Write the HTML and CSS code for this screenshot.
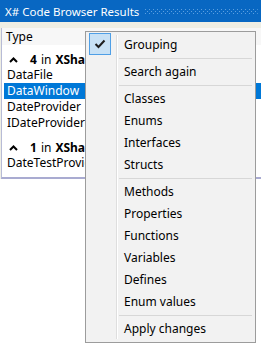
FILE: index.html
```html
<!DOCTYPE html>
<html>
<head>
    <title>X# Code Browser Results</title>
    <meta name="viewport" content="width=device-width, initial-scale=1.0">
    <link rel="stylesheet" href="styles.css">
</head>
<body>
    <div class="window">
        <!-- Barra de título -->
        <div class="titlebar">
            <span class="title">X# Code Browser Results</span>
            <svg class="grip" height="5">
                <defs>
                    <pattern id="dots" width="4" height="4" patternUnits="userSpaceOnUse">
                        <rect x="0" y="0" width="1" height="1" fill="#5b9fe0"/>
                        <rect x="2" y="2" width="1" height="1" fill="#5b9fe0"/>
                    </pattern>
                </defs>
                <rect width="100%" height="5" fill="url(#dots)"/>
            </svg>
        </div>

        <div class="panel">
            <div class="list">
                <div class="list-header">Type</div>

                <div class="group-header">
                    <svg class="chevron" width="9" height="6" viewBox="0 0 9 6"><path d="M1 5 L4.5 1.5 L8 5" fill="none" stroke="#000" stroke-width="2"/></svg>
                    <b>4</b> in <b>XSharp.CodeBrowser</b>
                </div>
                <div class="row">DataFile</div>
                <div class="row selected">DataWindow</div>
                <div class="row">DateProvider</div>
                <div class="row">IDateProvider</div>

                <div class="group-header second">
                    <svg class="chevron" width="9" height="6" viewBox="0 0 9 6"><path d="M1 5 L4.5 1.5 L8 5" fill="none" stroke="#000" stroke-width="2"/></svg>
                    <b>1</b> in <b>XSharp.CodeBrowser.Tests</b>
                </div>
                <div class="row">DateTestProvider</div>
            </div>
        </div>
    </div>

    <!-- Menu de contexto -->
    <div class="context-menu">
        <div class="menu-item checked">
            <span class="check">
                <svg width="12" height="10" viewBox="0 0 12 10"><path d="M1.5 5 L4.5 8 L10.5 1.5" fill="none" stroke="#1e1e1e" stroke-width="2"/></svg>
            </span>
            Grouping
        </div>
        <div class="separator"></div>
        <div class="menu-item">Search again</div>
        <div class="separator"></div>
        <div class="menu-item">Classes</div>
        <div class="menu-item">Enums</div>
        <div class="menu-item">Interfaces</div>
        <div class="menu-item">Structs</div>
        <div class="separator"></div>
        <div class="menu-item">Methods</div>
        <div class="menu-item">Properties</div>
        <div class="menu-item">Functions</div>
        <div class="menu-item">Variables</div>
        <div class="menu-item">Defines</div>
        <div class="menu-item">Enum values</div>
        <div class="separator"></div>
        <div class="menu-item">Apply changes</div>
    </div>
</body>
</html>
```

FILE: styles.css
```css
body {
    font-family: "Noto Sans", "Open Sans", sans-serif;
    font-size: 12px;
    margin: 0;
    padding: 0;
    width: 261px;
    height: 347px;
    overflow: hidden;
    background-color: #ffffff;
    color: #000000;
}

.titlebar {
    display: flex;
    align-items: center;
    height: 22px;
    background-color: #0867c2;
    color: #ffffff;
}

.title {
    padding-left: 5px;
    font-size: 11.5px;
    white-space: nowrap;
}

.grip {
    flex: 1;
    margin: 0 3px 0 6px;
}

.panel {
    background-color: #eeeee4;
    padding-top: 6px;
    padding-left: 1px;
}

.list {
    width: 290px;
    background-color: #ffffff;
    border-left: 1px solid #b7bbd6;
    border-bottom: 2px solid #a9abd1;
    padding-bottom: 6px;
    white-space: nowrap;
    overflow: hidden;
}

.list-header {
    height: 17px;
    line-height: 17px;
    padding-left: 4px;
    background-color: #f7f7f7;
}

.group-header {
    display: flex;
    align-items: center;
    height: 15px;
    line-height: 15px;
    margin-top: 7px;
    padding-left: 7px;
}

.group-header.second {
    margin-top: 9px;
}

.group-header b {
    margin: 0 4px;
}

.chevron {
    margin-right: 8px;
}

.row {
    height: 16px;
    line-height: 16px;
    margin-left: 2px;
    padding-left: 3px;
}

.row.selected {
    background-color: #0078d7;
    color: #ffffff;
}

.context-menu {
    position: absolute;
    left: 85px;
    top: 31px;
    width: 171px;
    box-sizing: border-box;
    border: 1px solid #9c9c9c;
    background-color: #f2f2f2;
    padding: 2px 2px;
}

/* linha vertical da coluna dos ícones */
.context-menu::before {
    content: "";
    position: absolute;
    left: 30px;
    top: 3px;
    bottom: 3px;
    width: 1px;
    background-color: #dedede;
    border-right: 1px solid #ffffff;
}

.menu-item {
    position: relative;
    height: 22px;
    line-height: 22px;
    padding-left: 36px;
}

.check {
    position: absolute;
    left: 1px;
    top: -1px;
    width: 20px;
    height: 20px;
    border: 1px solid #4f9fe6;
    background-color: #c8e1f5;
    display: flex;
    align-items: center;
    justify-content: center;
}

.separator {
    height: 5px;
    margin-left: 31px;
    margin-right: 1px;
    position: relative;
}

.separator::after {
    content: "";
    position: absolute;
    left: 0;
    right: 0;
    top: 2px;
    height: 1px;
    background-color: #d7d7d7;
}
```
